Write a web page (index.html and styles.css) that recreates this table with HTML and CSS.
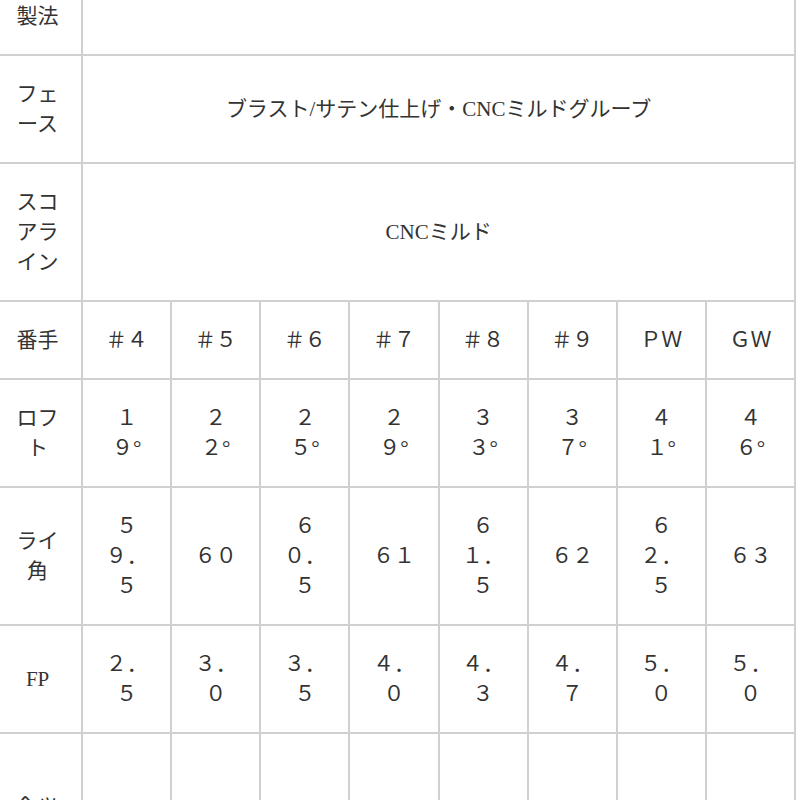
FILE: index.html
```html
<!DOCTYPE html>
<html lang="ja">
<head>
<meta charset="utf-8">
<title>スペック</title>
<link rel="stylesheet" href="styles.css">
</head>
<body>
<table class="spec">
  <colgroup>
    <col><col><col><col><col><col><col><col><col>
  </colgroup>
  <tbody>
    <tr>
      <th>製法</th>
      <td colspan="8"></td>
    </tr>
    <tr>
      <th>フェース</th>
      <td colspan="8">ブラスト/サテン仕上げ・CNCミルドグルーブ</td>
    </tr>
    <tr>
      <th>スコアライン</th>
      <td colspan="8">CNCミルド</td>
    </tr>
    <tr>
      <th>番手</th>
      <td>＃４</td><td>＃５</td><td>＃６</td><td>＃７</td><td>＃８</td><td>＃９</td><td>ＰＷ</td><td>ＧＷ</td>
    </tr>
    <tr>
      <th>ロフト</th>
      <td>１９°</td><td>２２°</td><td>２５°</td><td>２９°</td><td>３３°</td><td>３７°</td><td>４１°</td><td>４６°</td>
    </tr>
    <tr>
      <th>ライ角</th>
      <td>５９．５</td><td>６０</td><td>６０．５</td><td>６１</td><td>６１．５</td><td>６２</td><td>６２．５</td><td>６３</td>
    </tr>
    <tr>
      <th>FP</th>
      <td>２．５</td><td>３．０</td><td>３．５</td><td>４．０</td><td>４．３</td><td>４．７</td><td>５．０</td><td>５．０</td>
    </tr>
    <tr class="tall">
      <th>ヘッド重量</th>
      <td></td><td></td><td></td><td></td><td></td><td></td><td></td><td></td>
    </tr>
  </tbody>
</table>
</body>
</html>
```
FILE: styles.css
```css
html, body {
  margin: 0;
  padding: 0;
  background: #ffffff;
}

body {
  overflow: hidden;
  font-family: "Liberation Serif", "Noto Sans CJK JP", serif;
  font-size: 21px;
  line-height: 30px;
  color: #333333;
}

.spec {
  width: 804px;
  margin: -24px 0 0 -8px;
  border-collapse: collapse;
  table-layout: fixed;
}

.spec th,
.spec td {
  border: 2px solid #d0d0d0;
  padding: 23px 21px;
  text-align: center;
  vertical-align: middle;
  font-weight: normal;
}

.spec .tall th,
.spec .tall td {
  height: 150px;
}
```
